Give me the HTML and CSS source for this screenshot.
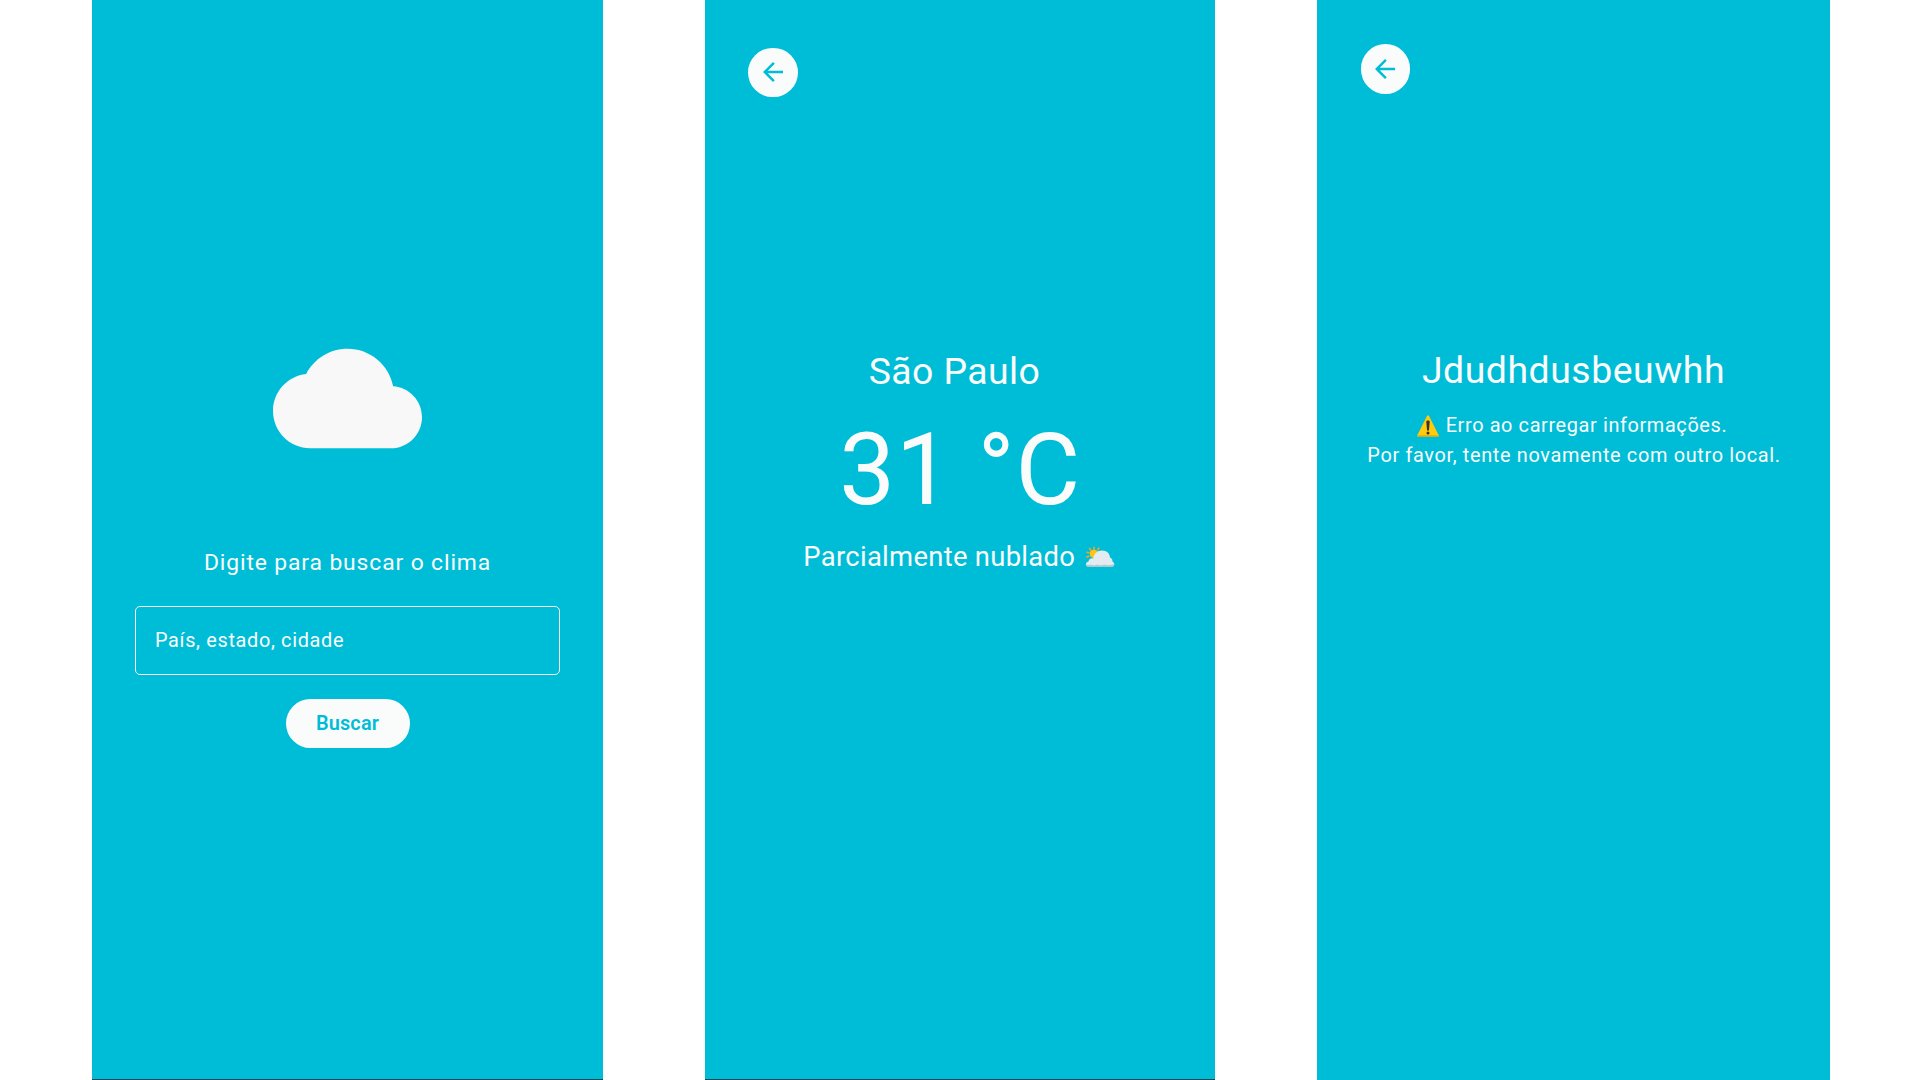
FILE: index.html
```html
<!DOCTYPE html>
<html lang="pt-BR">
<head>
<meta charset="utf-8">
<title>Clima</title>
<link rel="stylesheet" href="styles.css">
</head>
<body>
<main class="screens">
  <section class="screen search">
    <svg class="cloud" viewBox="0 0 24 24" aria-hidden="true"><path d="M19.35 10.04C18.67 6.59 15.64 4 12 4 9.11 4 6.6 5.64 5.35 8.04 2.34 8.36 0 10.91 0 14c0 3.31 2.69 6 6 6h13c2.76 0 5-2.24 5-5 0-2.64-2.05-4.78-4.65-4.96z"/></svg>
    <h1 class="prompt">Digite para buscar o clima</h1>
    <div class="field">País, estado, cidade</div>
    <button class="submit">Buscar</button>
  </section>

  <section class="screen result">
    <button class="back" aria-label="Voltar"><svg viewBox="0 0 24 24"><path d="M20 11H7.83l5.59-5.59L12 4l-8 8 8 8 1.41-1.41L7.83 13H20v-2z"/></svg></button>
    <h2 class="place">São Paulo</h2>
    <p class="temp">31 °C</p>
    <p class="condition"><span>Parcialmente nublado</span>
      <svg class="weather" viewBox="0 0 30 22" aria-hidden="true">
        <g stroke="#fba61b" stroke-width="1.5" stroke-linecap="round"><path d="M9 1.2v2.1M4.5 2.3l1.2 1.9M13.9 1.8l-1.1 1.8M2 6.2l2 .7M1.8 11l2.1-.8"/></g>
        <circle cx="8.9" cy="7.8" r="4.1" fill="#ffc412"/>
        <path d="M3 20.5C.2 20.3.2 16.2 3.5 15.6 3.8 13.2 6 12 8.2 12.4 9 7.6 12.2 4.5 17 4.5c5 0 7.7 3 8 7.1 2 .8 2.6 2.4 2.5 4.1 2.5.9 2.4 4.6-.3 4.8z" fill="#e2ebf0"/>
        <path d="M.8 18.2c1.4 1.1 3.2.8 4.6.2 2 1 5 1 7 .1 2.4.9 5 .8 7 0 2.7.9 7 .7 9.8-.6.1 1.8-.8 2.8-2.4 2.8H3.1C1.6 20.7.7 19.5.8 18.2z" fill="#b5c9d3"/>
      </svg>
    </p>
  </section>

  <section class="screen failure">
    <button class="back" aria-label="Voltar"><svg viewBox="0 0 24 24"><path d="M20 11H7.83l5.59-5.59L12 4l-8 8 8 8 1.41-1.41L7.83 13H20v-2z"/></svg></button>
    <h2 class="place">Jdudhdusbeuwhh</h2>
    <p class="message"><span class="line alert"><svg class="warning" viewBox="0 0 22 22" aria-hidden="true">
      <path d="M10 .9c.5-.9 1.5-.9 2 0l9.6 19c.4.9 0 1.6-.9 1.6H1.3c-.9 0-1.3-.7-.9-1.6z" fill="#ffcb0c"/>
      <path d="M.3 20.3h21.4c.1.8-.3 1.2-1 1.2H1.3c-.7 0-1.1-.4-1-1.2z" fill="#e9a711"/>
      <path d="M9.3 6.8c0-1.9 3.4-1.9 3.4 0l-.7 8.1c-.1 1.1-1.9 1.1-2 0z" fill="#35342f"/><circle cx="11" cy="18" r="1.5" fill="#35342f"/>
    </svg><span>Erro ao carregar informações.</span></span>
    <span class="line">Por favor, tente novamente com outro local.</span></p>
  </section>
</main>
</body>
</html>
```
FILE: styles.css
```css
* { box-sizing: border-box; }
body {
  margin: 0;
  background: #fff;
  font-family: Roboto, "Liberation Sans", sans-serif;
  color: #fafcfc;
  letter-spacing: 0.66px;
}
h1, h2, p { margin: 0; font-weight: 400; white-space: nowrap; }
button { border: 0; padding: 0; font: inherit; letter-spacing: inherit; }

.screens {
  display: grid;
  grid-template-columns: 511px 510px 513px;
  column-gap: 102px;
  padding-left: 92px;
  height: 1080px;
  overflow: hidden;
}
.screen {
  display: flex;
  flex-direction: column;
  align-items: center;
  background: #00bdd7;
}
.search, .result { border-bottom: 1px solid #064650; }

.search { padding-top: 324px; }
.cloud { width: 149px; height: 149px; fill: #f8f8f8; }
.prompt { margin-top: 75px; font-size: 22.9px; line-height: 30px; letter-spacing: 0.87px; }
.field {
  display: flex;
  align-items: center;
  width: 425px;
  height: 69px;
  margin-top: 28px;
  padding-left: 19px;
  border: 1.4px solid #f2fcfd;
  border-radius: 5px;
  font-size: 19.9px;
}
.submit {
  width: 124px;
  height: 49.5px;
  margin-top: 23.5px;
  padding-top: 1px;
  border-radius: 25px;
  background: #fafcfc;
  color: #00bdd7;
  font-size: 19.9px;
  font-weight: 600;
  letter-spacing: 0.15px;
}

.back {
  display: grid;
  place-items: center;
  align-self: flex-start;
  width: 49.5px;
  height: 49.5px;
  margin-left: 43.4px;
  border-radius: 50%;
  background: #fafcfc;
}
.back svg { width: 30px; height: 30px; fill: #00bdd7; }
.result { padding-top: 47.5px; }
.failure { padding-top: 44.2px; }
.failure .back { margin-left: 43.6px; }
.place { font-size: 37.4px; line-height: 50px; }
.result .place { margin-top: 249px; margin-right: 11px; letter-spacing: 0.42px; }
.failure .place { margin-top: 251px; letter-spacing: 0.53px; }
.temp { margin-top: 23.5px; font-size: 99.4px; line-height: 100px; }
.condition {
  display: flex;
  align-items: center;
  gap: 9.5px;
  margin-top: 19.5px;
  margin-right: 2px;
  font-size: 27.4px;
  line-height: 36px;
  letter-spacing: 0.3px;
}
.weather { width: 30px; height: 22px; }
.message { margin-top: 16px; font-size: 19.9px; line-height: 30px; text-align: center; }
.line { display: flex; justify-content: center; align-items: center; gap: 7px; margin-left: 1px; }
.alert { margin-right: 4px; letter-spacing: 0.62px; }
.warning { width: 22px; height: 22px; }
```
